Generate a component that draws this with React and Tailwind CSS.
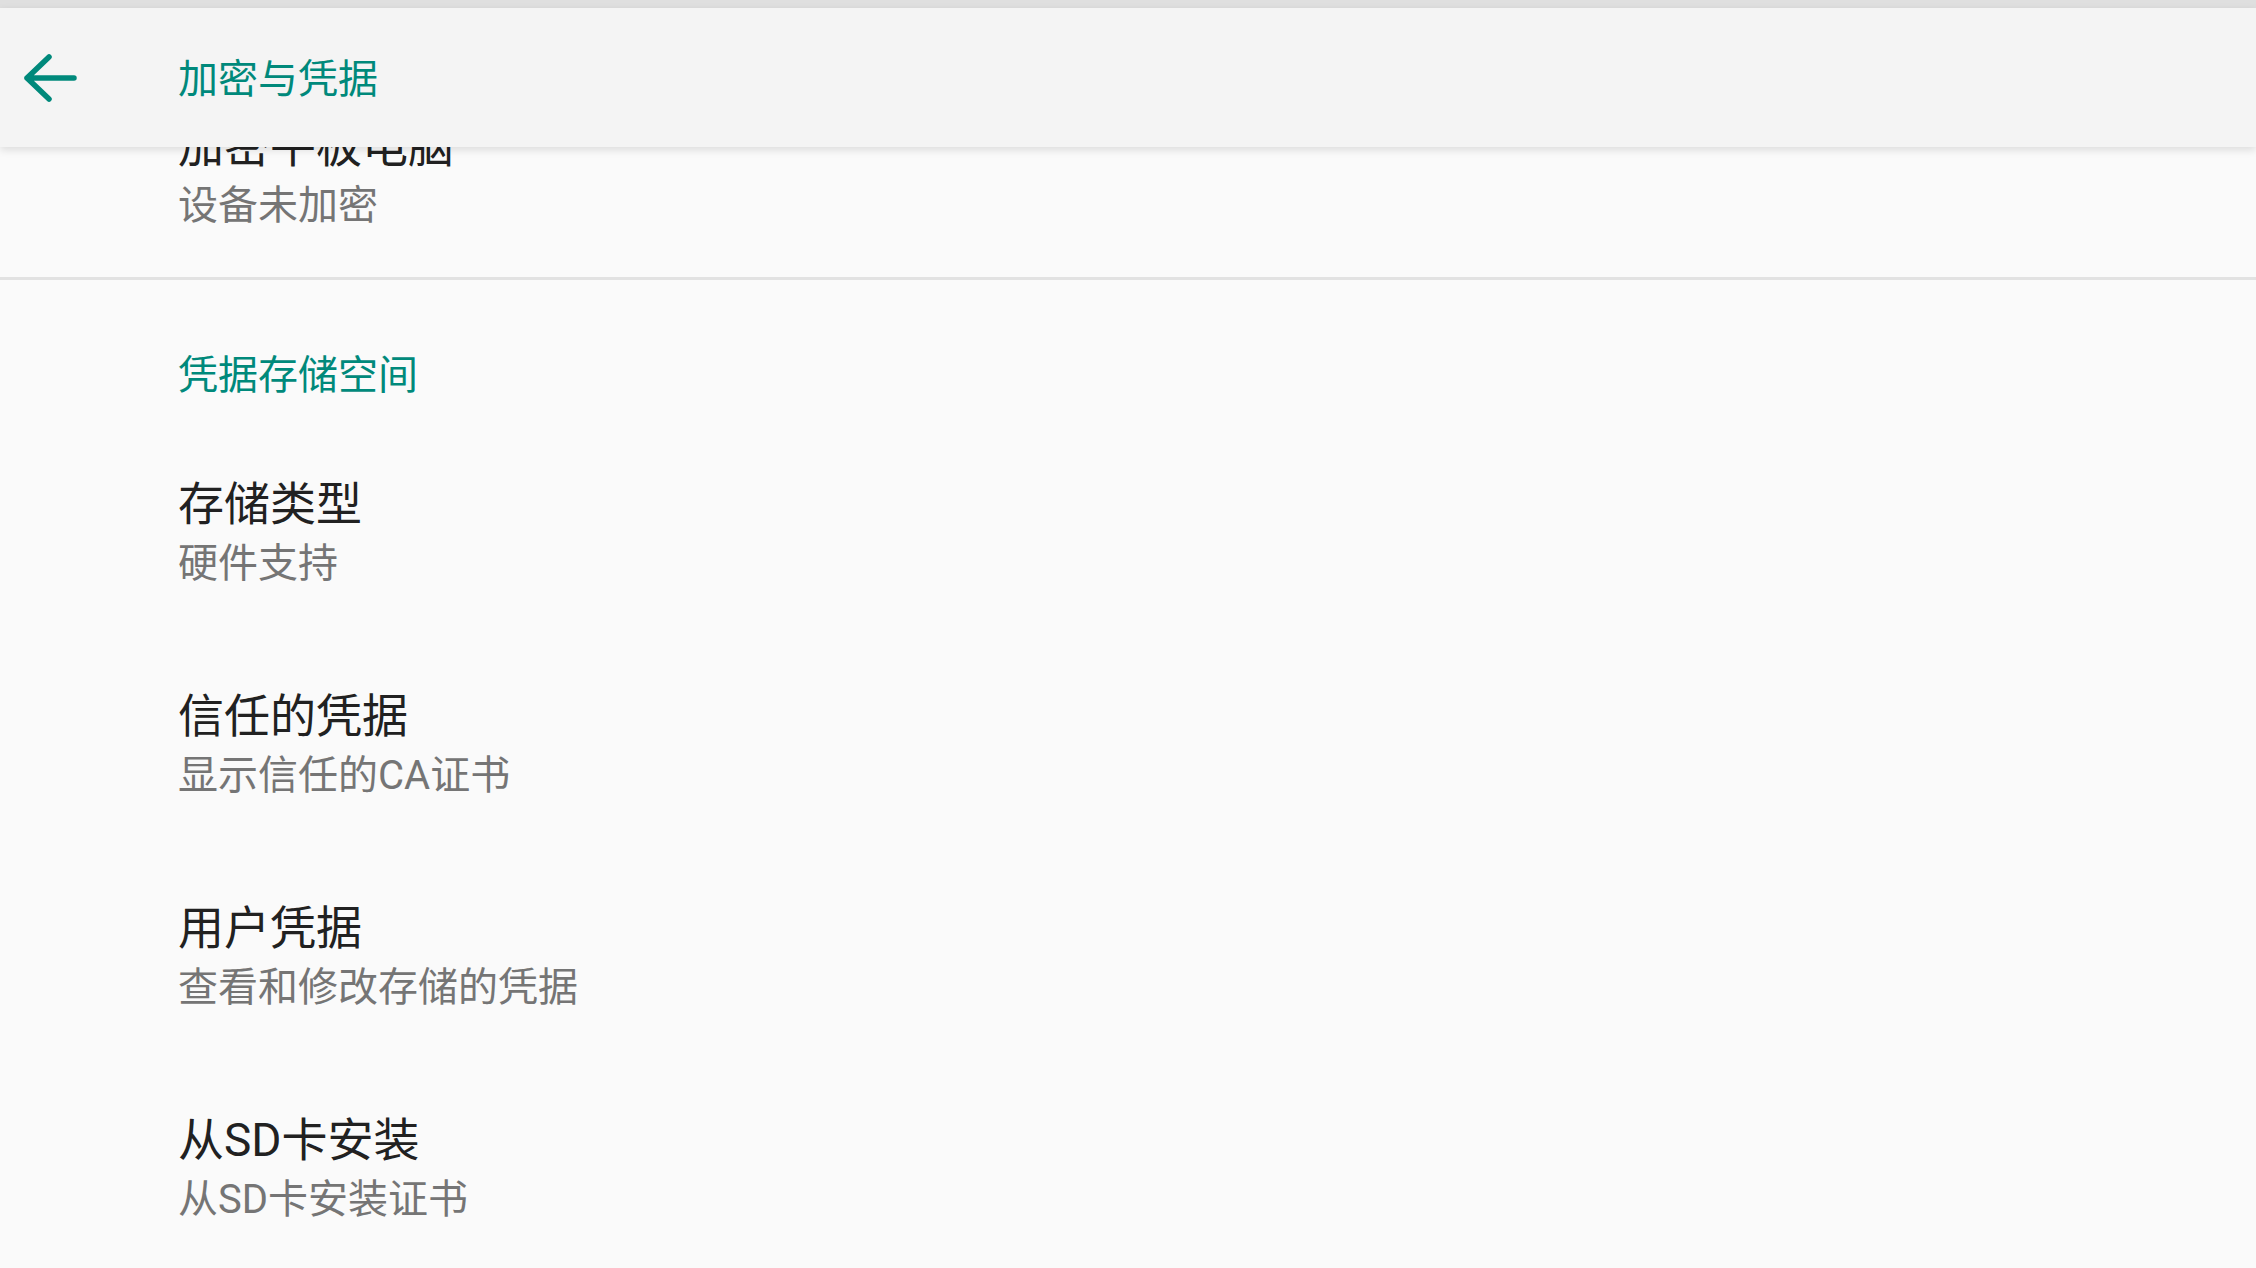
import React from "react";

const font = { fontFamily: "Roboto, 'Noto Sans CJK SC', sans-serif" };

const items = [
  { title: "存储类型", sub: "硬件支持" },
  { title: "信任的凭据", sub: "显示信任的CA证书" },
  { title: "用户凭据", sub: "查看和修改存储的凭据" },
  { title: "从SD卡安装", sub: "从SD卡安装证书" },
];

const Item = ({ title, sub }) => (
  <div className="h-[212px] flex flex-col pt-[51px] pl-[178px]">
    <p className="text-[46px] leading-[60px] text-[#212121]">{title}</p>
    <p className="mt-[4px] text-[40px] leading-[52px] text-[#757575]">{sub}</p>
  </div>
);

const BackArrow = () => (
  <svg width="56" height="50" viewBox="0 0 56 50" fill="none">
    <path
      d="M5 25H52M5 25L27 4M5 25L27 46"
      stroke="#00897b"
      strokeWidth="5.5"
      strokeLinecap="round"
      strokeLinejoin="round"
    />
  </svg>
);

export default function App() {
  return (
    <div className="h-screen w-full overflow-hidden bg-[#fafafa] flex flex-col" style={font}>
      <div className="h-[8px] shrink-0 bg-[#dfdfdf]" />

      {/* toolbar */}
      <div className="relative z-10 h-[139px] shrink-0 flex items-center bg-[#f4f4f4] shadow-[0_3px_8px_rgba(0,0,0,0.12)]">
        <div className="w-[178px] pl-[22px] flex items-center">
          <BackArrow />
        </div>
        <h1 className="text-[40px] leading-[52px] text-[#00897b] mt-[4px]">加密与凭据</h1>
      </div>

      {/* list, scrolled so the first row sits under the toolbar */}
      <div className="-mt-[82px] flex flex-col">
        <Item title="加密平板电脑" sub="设备未加密" />
        <div className="h-[3px] bg-[#e2e2e2]" />
        <div className="h-[143px] pt-[70px] pl-[178px]">
          <p className="text-[40px] leading-[52px] text-[#00897b]">凭据存储空间</p>
        </div>
        {items.map((it) => (
          <Item key={it.title} title={it.title} sub={it.sub} />
        ))}
      </div>
    </div>
  );
}
